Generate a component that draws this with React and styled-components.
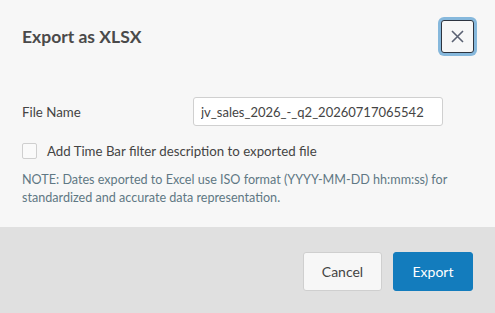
import React from 'react';
import styled, { createGlobalStyle } from 'styled-components';

const GlobalStyle = createGlobalStyle`
  html, body {
    margin: 0;
    padding: 0;
    background: #f7f7f7;
  }
  body {
    font-family: Lato, "Open Sans", sans-serif;
    color: #444;
  }
`;

const Dialog = styled.div`
  width: 495px;
  height: 313px;
  display: flex;
  flex-direction: column;
  background: #f7f7f7;
`;

const Header = styled.div`
  display: flex;
  align-items: center;
  justify-content: space-between;
  padding: 18px 21px 0 22px;
  height: 37px;
`;

const Title = styled.h2`
  margin: 0;
  font-size: 17.5px;
  font-weight: 700;
  color: #4a4a4a;
`;

const CloseButton = styled.button`
  width: 33px;
  height: 33px;
  display: flex;
  align-items: center;
  justify-content: center;
  padding: 0;
  background: #f7f7f7;
  border: 1px solid #2d3440;
  border-radius: 3px;
  box-shadow: 0 0 0 3px #86b8dc;
  color: #5a6172;
  cursor: pointer;
`;

const Body = styled.div`
  flex: 1;
  display: flex;
  flex-direction: column;
  padding: 42px 22px 0 22px;
`;

const FieldRow = styled.div`
  display: flex;
  align-items: center;
`;

const Label = styled.label`
  width: 171px;
  font-size: 13.3px;
  color: #444;
`;

const TextInput = styled.input`
  width: 250px;
  height: 29px;
  box-sizing: border-box;
  padding: 0 7px;
  border: 1px solid #d0d0d0;
  border-radius: 3px;
  background: #fff;
  font-family: inherit;
  font-size: 13px;
  color: #444;
  outline: none;
`;

const CheckRow = styled.label`
  display: flex;
  align-items: center;
  gap: 10px;
  margin-top: 17px;
  font-size: 13.25px;
  color: #444;
`;

const Box = styled.span`
  width: 15px;
  height: 16px;
  box-sizing: border-box;
  border: 1px solid #cfcfcf;
  border-radius: 2px;
  background: #fafafa;
`;

const Note = styled.p`
  margin: 12px 0 0 0;
  font-size: 12.6px;
  line-height: 18px;
  color: #5f7884;
`;

const Footer = styled.div`
  height: 86px;
  box-sizing: border-box;
  background: #e0e0e0;
  display: flex;
  justify-content: flex-end;
  align-items: flex-start;
  gap: 11px;
  padding: 25px 22px 0 0;
`;

const Button = styled.button`
  height: 39px;
  width: ${({ wide }) => (wide ? '80px' : '79px')};
  border-radius: 3px;
  font-family: inherit;
  font-size: 14px;
  cursor: pointer;
  border: 1px solid ${({ primary }) => (primary ? '#137cbd' : '#cfcfcf')};
  background: ${({ primary }) => (primary ? '#137cbd' : '#f7f7f7')};
  color: ${({ primary }) => (primary ? '#fff' : '#444')};
`;

const App = () => (
  <>
    <GlobalStyle />
    <Dialog>
      <Header>
        <Title>Export as XLSX</Title>
        <CloseButton aria-label="Close">
          <svg width="13" height="13" viewBox="0 0 13 13">
            <path d="M1 1 L12 12 M12 1 L1 12" stroke="currentColor" strokeWidth="1.6" />
          </svg>
        </CloseButton>
      </Header>
      <Body>
        <FieldRow>
          <Label>File Name</Label>
          <TextInput defaultValue="jv_sales_2026_-_q2_20260717065542" />
        </FieldRow>
        <CheckRow>
          <Box />
          Add Time Bar filter description to exported file
        </CheckRow>
        <Note>
          NOTE: Dates exported to Excel use ISO format (YYYY-MM-DD hh:mm:ss) for
          standardized and accurate data representation.
        </Note>
      </Body>
      <Footer>
        <Button>Cancel</Button>
        <Button primary wide>Export</Button>
      </Footer>
    </Dialog>
  </>
);

export default App;
